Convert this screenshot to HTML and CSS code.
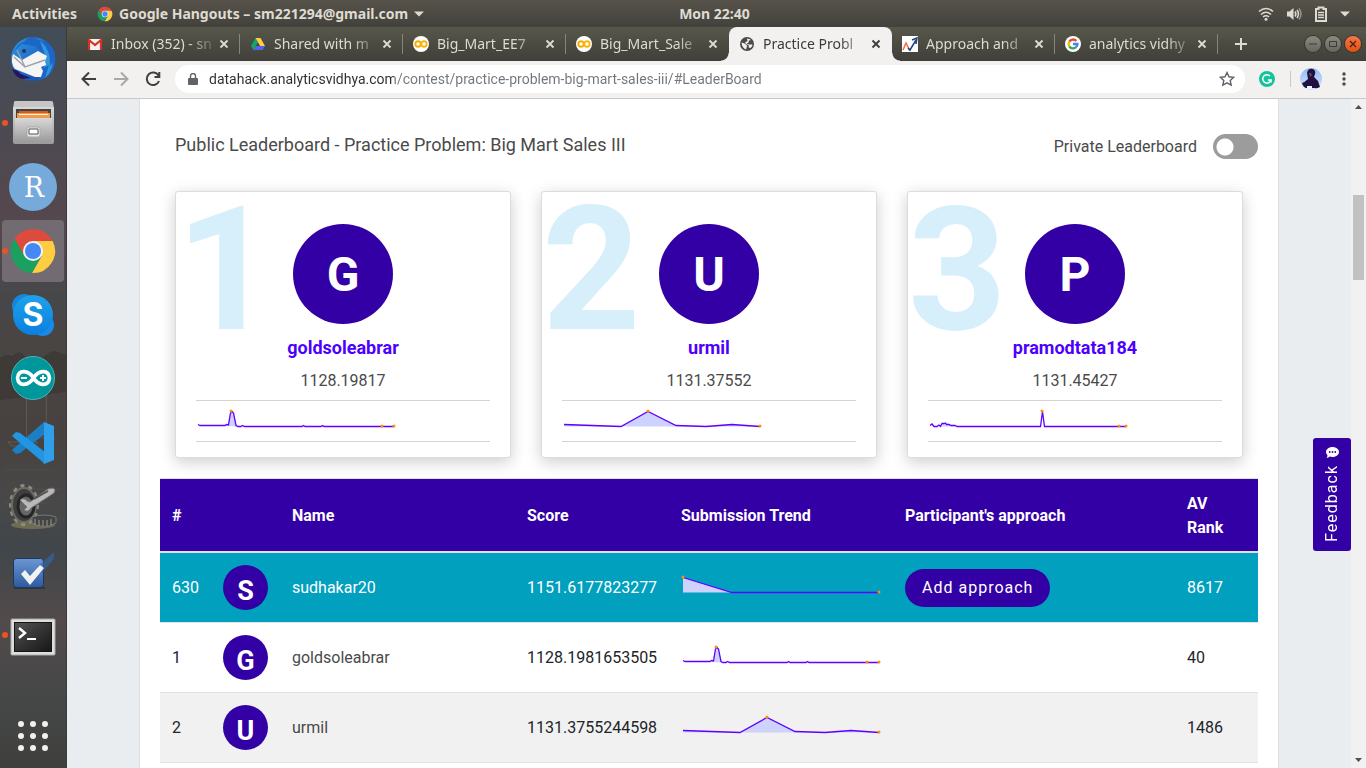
FILE: index.html
```html
<!DOCTYPE html>
<html lang="en">
<head>
<meta charset="utf-8">
<meta name="viewport" content="width=device-width, initial-scale=1">
<title>Practice Problem: Big Mart Sales III</title>
<link rel="stylesheet" href="styles.css">
</head>
<body>
<svg class="defs" aria-hidden="true">
  <defs>
    <linearGradient id="sky" x1="0" y1="0" x2="0" y2="1"><stop offset="0" stop-color="#1fa2ea"/><stop offset="1" stop-color="#0a7fe0"/></linearGradient>
    <linearGradient id="bird" x1="0" y1="0" x2="1" y2="1"><stop offset="0" stop-color="#2f9be6"/><stop offset=".6" stop-color="#1e62c4"/><stop offset="1" stop-color="#1a4399"/></linearGradient>
    <linearGradient id="metal" x1="0" y1="0" x2="0" y2="1"><stop offset="0" stop-color="#d8d8d8"/><stop offset="1" stop-color="#9b9b9b"/></linearGradient>
    <linearGradient id="screen" x1="0" y1="0" x2="1" y2="1"><stop offset="0" stop-color="#555"/><stop offset=".5" stop-color="#333"/><stop offset="1" stop-color="#171717"/></linearGradient>
    <linearGradient id="tick" x1="0" y1="0" x2="0" y2="1"><stop offset="0" stop-color="#6b97d3"/><stop offset="1" stop-color="#2c5a9e"/></linearGradient>
    <linearGradient id="photo" x1="0" y1="0" x2="0" y2="1"><stop offset="0" stop-color="#8fbcf4"/><stop offset="1" stop-color="#d5e6fb"/></linearGradient>
  </defs>
  <symbol id="chrome" viewBox="0 0 48 48">
    <path fill="#dd4b3e" d="M5.500 12A22 22 0 0 1 43.600 14H24L15.300 29Z"/>
    <path fill="#ffcd42" d="M43.600 14A22 22 0 0 1 22.900 46L32.700 29L24 14Z"/>
    <path fill="#1aa15f" d="M22.900 46A22 22 0 0 1 5.500 12L15.300 29H32.700Z"/>
    <circle cx="24" cy="24" r="10" fill="#f3f3f3"/><circle cx="24" cy="24" r="8" fill="#4587f3"/>
  </symbol>
  <symbol id="close" viewBox="0 0 10 10"><path d="M1.500 1.500l7 7m0-7l-7 7" fill="none" stroke="currentColor" stroke-width="1.800"/></symbol>
  <symbol id="colab" viewBox="0 0 16 16"><circle cx="8" cy="8" r="8" fill="#fff"/><circle cx="5" cy="8" r="2.700" fill="none" stroke="#f9ab00" stroke-width="1.900"/><circle cx="11" cy="8" r="2.700" fill="none" stroke="#fbb60f" stroke-width="1.900"/></symbol>
  <symbol id="trend-me" viewBox="0 0 200 20"><path class="area" d="M2 3.500L51 18.500H2Z"/><path class="line" d="M2 3.500L51 18.500H198"/><circle class="dot" cx="2" cy="3" r="1.500"/><circle class="dot" cx="198" cy="18" r="1.500"/></symbol>
  <symbol id="trend-g" viewBox="0 0 200 20"><path class="area" d="M31 18L35 4.500H37L41 18.500Z"/><path class="line" d="M2 16.500L4 17.500H29L30.500 16.500L32.500 17L34.500 5L36 3.500L37.500 5L40 17.500L42 18.500H45L46.500 17.500L48.500 18.500H106L107.500 17.500L109 18.500H125L126.500 17.500L128 18.500H198"/><circle class="dot" cx="35" cy="3" r="1.500"/><circle class="dot" cx="186" cy="18" r="1.500"/><circle class="dot" cx="198" cy="18" r="1.500"/></symbol>
  <symbol id="trend-u" viewBox="0 0 200 20"><path class="area" d="M2 16.500L59 18.500L86 3.500L114 18L144 18.500L170 16.500L198 18.500H2Z"/><path class="line" d="M2 16.500L59 18.500L86 3.500L114 17.500L144 18.500L170 16.500L198 18.500"/><circle class="dot" cx="86" cy="3" r="1.500"/><circle class="dot" cx="198" cy="18" r="1.500"/></symbol>
  <symbol id="trend-p" viewBox="0 0 200 20"><path class="area" d="M12 18.500L14 16L18 15L23 17L28 18.500Z"/><path class="line" d="M2 17.500L4 16L6 18.500H9L11 17L12.500 18.500L14 15.500H16L17.500 15L18.500 16.500H21L23 17.500H27L29 18.500H112.500L114.500 3.500L116.500 18.500H198"/><circle class="dot" cx="114" cy="3" r="1.500"/><circle class="dot" cx="191" cy="18" r="1.500"/><circle class="dot" cx="198" cy="18" r="1.500"/></symbol>
</svg>

<header class="topbar">
  <div class="topbar-left">
    <button class="bar-button">Activities</button>
    <button class="bar-button app-menu"><svg width="16" height="16"><use href="#chrome"/></svg><span>Google Hangouts – sm221294@gmail.com</span><svg width="10" height="6" viewBox="0 0 10 6"><path d="M0 .5h10L5 5.500z" fill="currentColor"/></svg></button>
  </div>
  <button class="clock">Mon 22:40</button>
  <div class="topbar-right">
    <svg width="16" height="16" viewBox="0 0 16 16" fill="none" stroke="#dfdbd2" stroke-width="1.600"><path d="M1 5.500Q8-.5 15 5.500M3 8.500Q8 4 13 8.500M5 11Q8 8.500 11 11"/><circle cx="8" cy="13.300" r="1.500" fill="#dfdbd2" stroke="none"/></svg>
    <svg width="16" height="16" viewBox="0 0 16 16" fill="none" stroke="#dfdbd2" stroke-width="1.500"><path d="M1 5.500h2.500L7.500 2v12L3.500 10.500H1z" fill="#dfdbd2" stroke="none"/><path d="M9 5.500q1.800 2.500 0 5M11 4q3 4 0 8"/><path d="M13 2.500q4 5.500 0 11" opacity=".5"/></svg>
    <svg width="14" height="16" viewBox="0 0 14 16" fill="none" stroke="#dfdbd2"><path d="M2 3h2.500V1.500h5V3H12v12H2z" stroke-width="2"/><path d="M4 6.500h6M4 9h6M4 11.500h6" stroke-width="1.500"/></svg>
    <svg width="10" height="6" viewBox="0 0 10 6"><path d="M0 .5h10L5 5.500z" fill="#dfdbd2"/></svg>
  </div>
</header>

<div class="desktop">
  <nav class="dock" aria-label="Applications">
    <svg class="wallpaper" viewBox="0 0 67 741" preserveAspectRatio="none" aria-hidden="true">
      <path d="M0 331q6-5 13-2q6-8 14 2q12 2 20-3q7-6 12-3l8 3v37l-67 8z" fill="#332f2c" opacity=".5"/>
      <path d="M27 345v69M47 350v60M8 415h30l-3 4H12zM42 411h14" fill="none" stroke="#8e8983" opacity=".35"/>
      <path d="M4 443h50M12 462h50M3 476h45M15 492h50" stroke="#777" opacity=".15"/>
    </svg>
    <button class="dock-item" aria-label="Thunderbird"><svg viewBox="0 0 48 48"><circle cx="24" cy="24" r="22" fill="url(#bird)"/><path d="M5 16Q10 8 16 6q4-5 9-4q5 1 3 3q14 0 18 14q2 12-5 20q-4 5-12 6l5-8-3-7 5-3-1-8-9-8-13-2z" fill="#1c66c8"/><path d="M31 6q11 8 10 25l3-4q-1 10-8 16l4-13-5 3 1-13z" fill="#38a7e2" opacity=".75"/><path d="M4 19l9 6 16-9 9 5-2 5 1 4-5 2 2 4-2 6-6 0-20-8Q1 28 4 19z" fill="#f5f5f6"/><path d="M8 15l8 17 20-7M5 22l11 10" fill="none" stroke="#9da1a8" stroke-width="1.400"/><path d="M3 34q6 1 9 5l10 4-9 1Q6 42 3 34z" fill="#25165f"/><circle cx="15" cy="16" r="2" fill="#27365c"/></svg></button>
    <button class="dock-item running" aria-label="Files"><svg viewBox="0 0 48 48"><path d="M5 3q0-1 2-1h35q2 0 2 1l1 7H4z" fill="#c6c6c6"/><path d="M4 8h41v35q0 2-2 2H6q-2 0-2-2z" fill="url(#metal)"/><path d="M7 10h35v10H7z" fill="#444"/><path d="M10 12h29v7H10z" fill="#cf5b25"/><path d="M8 14h33v5H8z" fill="#f19b4a"/><path d="M10 15h29v1H10z" fill="#fff5de"/><path d="M6 19h37v24H6z" fill="url(#metal)"/><rect x="18" y="28" width="13" height="10" rx="2" fill="#e8e8e8" stroke="#aaa"/><path d="M20 30h9v5h-9z" fill="#fff" stroke="#555"/></svg></button>
    <button class="dock-item" aria-label="RStudio"><svg viewBox="0 0 48 48"><circle cx="24" cy="24" r="24" fill="#75aadb"/><text x="25" y="34" class="logo-r">R</text></svg></button>
    <button class="dock-item running active" aria-label="Google Chrome"><svg viewBox="0 0 48 48"><use href="#chrome"/></svg></button>
    <button class="dock-item" aria-label="Skype"><svg viewBox="0 0 48 48"><circle cx="15" cy="15" r="12" fill="#1686d9"/><circle cx="34" cy="34" r="11" fill="#1b8ae6"/><circle cx="24" cy="24" r="20" fill="url(#sky)"/><text x="24" y="35" class="logo-s">S</text></svg></button>
    <button class="dock-item" aria-label="Arduino"><svg viewBox="0 0 48 48"><circle cx="24" cy="23" r="21.500" fill="#00979c" stroke="#4db4b6"/><path d="M24.500 23c-5-8-15-9-16 0c1 9 11 8 16 0c5-8 15-9 16 0c-1 9-11 8-16 0z" fill="none" stroke="#fff" stroke-width="3.600"/><path d="M12 23h6M31 23h6M34 20v6" stroke="#fff" stroke-width="2"/></svg></button>
    <button class="dock-item" aria-label="Visual Studio Code"><svg viewBox="0 0 48 48"><path d="M35 3L3 31l4 4 4-1L36 15z" fill="#1c7fc5"/><path d="M3 17l4-4 4 1 25 19v12z" fill="#2196e3"/><path d="M35 3l10 4v34l-10 4q-1-1 0-2V4q-1-1 0-1z" fill="#2f9fea"/></svg></button>
    <button class="dock-item" aria-label="System tools"><svg viewBox="0 0 48 48"><ellipse cx="24" cy="42" rx="22" ry="4" fill="#8a875b" opacity=".6"/><ellipse cx="15" cy="22" rx="13" ry="19" fill="none" stroke="#8c8d76" stroke-width="4" stroke-dasharray="4 4"/><ellipse cx="15" cy="22" rx="12" ry="17" fill="#3e3e3e" stroke="#6a6a6a" stroke-width="2"/><ellipse cx="17" cy="23" rx="8" ry="11" fill="#666" stroke="#252525" stroke-width="3"/><path d="M11 17q4-3 7 1l3 1 18-13q6-2 7 1q0 3-4 5L22 25q-3 5-7 2l3-3-3-3z" fill="#b9b9b9" stroke="#777"/><path d="M25 16l14-8" stroke="#555" stroke-width="2"/><path d="M23 34q12-4 24 0v6q-12 7-24 0z" fill="#444" stroke="#777"/><path d="M26 36v6m4-5v6m4-6v6m4-6v6m4-7v6" stroke="#999"/></svg></button>
    <button class="dock-item" aria-label="Tasks"><svg viewBox="0 0 48 48"><path d="M5 40h31v2H5z" fill="#222" opacity=".5"/><rect x="4.500" y="11.500" width="30" height="29" rx="3" fill="url(#tick)" stroke="#1b3865"/><path d="M28 20L45 5v7L33 26z" fill="#3268ae" opacity=".6"/><path d="M12 27l4-4 5 6 10-11 4 3-14 17z" fill="#f1f2f4"/></svg></button>
    <button class="dock-item running" aria-label="Terminal"><svg viewBox="0 0 48 48"><rect x="2" y="8" width="44" height="36" rx="1" fill="#dedede" stroke="#aaa"/><rect x="5.500" y="11.500" width="37" height="29" fill="url(#screen)" stroke="#151515"/><path d="M10 17l6 5-6 5" fill="none" stroke="#fff" stroke-width="2.400"/><path d="M18 28h9" stroke="#fff" stroke-width="2"/></svg></button>
    <button class="dock-item apps" aria-label="Show applications"><svg viewBox="0 0 48 48" fill="#f2f1ef"><circle cx="12" cy="12" r="3"/><circle cx="24" cy="12" r="3"/><circle cx="36" cy="12" r="3"/><circle cx="12" cy="24" r="3"/><circle cx="24" cy="24" r="3"/><circle cx="36" cy="24" r="3"/><circle cx="12" cy="36" r="3"/><circle cx="24" cy="36" r="3"/><circle cx="36" cy="36" r="3"/></svg></button>
  </nav>

  <div class="browser">
    <div class="tabs">
      <div class="tab"><svg class="favicon" viewBox="0 0 16 16"><path d="M1 3h14v11H1z" fill="#f2f2f2"/><path d="M2 14V4l6 5 6-5v10" fill="none" stroke="#d93025" stroke-width="2.200"/></svg><a class="tab-title" href="#">Inbox (352) - sn</a><button class="tab-close" aria-label="Close"><svg><use href="#close"/></svg></button></div>
      <div class="tab"><svg class="favicon" viewBox="0 0 16 16"><path d="M5.500 2L1 10l2.300 4L8 6z" fill="#11a861"/><path d="M5.500 2h5L15 10h-4.800z" fill="#ffcf48"/><path d="M5.500 10H15l-2.400 4H3.300z" fill="#4f66e8"/></svg><a class="tab-title" href="#">Shared with m</a><button class="tab-close" aria-label="Close"><svg><use href="#close"/></svg></button></div>
      <div class="tab"><svg class="favicon"><use href="#colab"/></svg><a class="tab-title" href="#">Big_Mart_EE7</a><button class="tab-close" aria-label="Close"><svg><use href="#close"/></svg></button></div>
      <div class="tab"><svg class="favicon"><use href="#colab"/></svg><a class="tab-title" href="#">Big_Mart_Sale</a><button class="tab-close" aria-label="Close"><svg><use href="#close"/></svg></button></div>
      <div class="tab current"><svg class="favicon" viewBox="0 0 16 16"><circle cx="8" cy="8" r="7" fill="#4a4a4a"/><path d="M2.500 6.500Q6 7 8 9.500Q8 11 7 13.500Q3 12 2.500 6.500zM8 2.500q2.500 0 4 1.500l-2 .5-.5 2-2 1.500 3 .5 3 0q0 2-2 3.500l-2-.5 .5-2L7 8 6 6.500 8.500 5z" fill="#f2f1f0"/></svg><a class="tab-title" href="#">Practice Probl</a><button class="tab-close" aria-label="Close"><svg><use href="#close"/></svg></button></div>
      <div class="tab"><svg class="favicon" viewBox="0 0 16 16"><path d="M0 0h16v16H0z" fill="#fff"/><path d="M1 14L4 7l4 8" fill="none" stroke="#ee6b45" stroke-width="1.500"/><path d="M6 12l2 2 6-10M10 4l5-2-1 6" fill="none" stroke="#1d4380" stroke-width="1.500"/></svg><a class="tab-title" href="#">Approach and</a><button class="tab-close" aria-label="Close"><svg><use href="#close"/></svg></button></div>
      <div class="tab"><svg class="favicon" viewBox="0 0 16 16"><circle cx="8" cy="8" r="8" fill="#fff"/><g fill="none" stroke-width="2.400"><path d="M4.300 5.700A4.400 4.400 0 0 1 11.300 5" stroke="#ea4335"/><path d="M4.300 10.300a4.400 4.400 0 0 1 0-4.600" stroke="#fbbc05"/><path d="M11 11.200a4.400 4.400 0 0 1-6.700-.9" stroke="#34a853"/><path d="M8 8h4.400a4.400 4.400 0 0 1-1.400 3.200" stroke="#4285f4"/></g></svg><a class="tab-title" href="#">analytics vidhy</a><button class="tab-close" aria-label="Close"><svg><use href="#close"/></svg></button></div>
      <button class="new-tab" aria-label="New tab"><svg width="12" height="12" viewBox="0 0 12 12"><path d="M6 0v12M0 6h12" stroke="currentColor" stroke-width="2"/></svg></button>
      <div class="window-buttons">
        <button aria-label="Minimize"><svg viewBox="0 0 16 16"><path d="M4 8h8" stroke="#3c3b37"/></svg></button>
        <button aria-label="Maximize"><svg viewBox="0 0 16 16"><path d="M4.500 5.500h7v5h-7z" fill="none" stroke="#3c3b37"/></svg></button>
        <button class="quit" aria-label="Close window"><svg viewBox="0 0 16 16"><path d="M5 5l6 6m0-6l-6 6" stroke="#46210f" stroke-width="1.300"/></svg></button>
      </div>
    </div>

    <div class="toolbar">
      <button class="tool" aria-label="Back"><svg viewBox="0 0 16 16"><path d="M15 8H2M8 1.500L1.500 8 8 14.500" /></svg></button>
      <button class="tool" aria-label="Forward" disabled><svg viewBox="0 0 16 16"><path d="M1 8h13M8 1.500L14.500 8 8 14.500"/></svg></button>
      <button class="tool" aria-label="Reload"><svg viewBox="0 0 16 16"><path d="M13.500 4.500A6.300 6.300 0 1 0 14 10M14.300 1v5H9.500" /></svg></button>
      <form class="omnibox">
        <svg width="10" height="12" viewBox="0 0 10 12"><path d="M1 5h8q1 0 1 1v5q0 1-1 1H1q-1 0-1-1V6q0-1 1-1z" fill="#5f6368"/><path d="M2.500 5V3a2.500 2.500 0 0 1 5 0v2" fill="none" stroke="#5f6368" stroke-width="1.400"/></svg>
        <input type="text" aria-label="Address" value="datahack.analyticsvidhya.com/contest/practice-problem-big-mart-sales-iii/#LeaderBoard">
        <button type="button" aria-label="Bookmark"><svg width="16" height="16" viewBox="0 0 16 16"><path d="M8 1.500l2 4.300 4.700.5-3.500 3.200 1 4.700L8 11.800l-4.200 2.400 1-4.700L1.300 6.300 6 5.800z" fill="none" stroke="#5f6368" stroke-width="1.400"/></svg></button>
      </form>
      <button class="extension" aria-label="Grammarly"><svg width="16" height="16" viewBox="0 0 16 16"><circle cx="8" cy="8" r="8" fill="#15c39a"/><path d="M11 5A4.200 4.200 0 1 0 12 9H9m3 0v2.500" fill="none" stroke="#fff" stroke-width="1.500"/></svg></button>
      <button class="profile" aria-label="Profile"><svg width="22" height="22" viewBox="0 0 22 22"><circle cx="11" cy="11" r="11" fill="url(#photo)"/><path d="M7 5q1-5 6-4q4 2 1 8l4 4 2 6q-4 2-5 1H6Q3 19 2 15q3-1 6-4z" fill="#22103f"/><path d="M9 5q2-1 3 2l-2 2z" fill="#6a4660"/><path d="M7 18h5v3H7z" fill="#e8f2ff"/></svg></button>
      <button class="extension" aria-label="Menu"><svg width="4" height="16" viewBox="0 0 4 16" fill="#4a4a4a"><circle cx="2" cy="3" r="1.700"/><circle cx="2" cy="8" r="1.700"/><circle cx="2" cy="13" r="1.700"/></svg></button>
    </div>

    <div class="viewport">
      <div class="page">
        <main class="container">
          <div class="board-head">
            <h1>Public Leaderboard - Practice Problem: Big Mart Sales III</h1>
            <label class="switch-label" for="private">Private Leaderboard <input type="checkbox" class="switch" id="private"></label>
          </div>

          <section class="podium">
            <article class="card"><span class="place">1</span><div class="avatar">G</div><a class="card-name" href="#">goldsoleabrar</a><p class="card-score">1128.19817</p><div class="card-trend"><svg class="trend"><use href="#trend-g"/></svg></div></article>
            <article class="card"><span class="place">2</span><div class="avatar">U</div><a class="card-name" href="#">urmil</a><p class="card-score">1131.37552</p><div class="card-trend"><svg class="trend"><use href="#trend-u"/></svg></div></article>
            <article class="card"><span class="place">3</span><div class="avatar">P</div><a class="card-name" href="#">pramodtata184</a><p class="card-score">1131.45427</p><div class="card-trend"><svg class="trend"><use href="#trend-p"/></svg></div></article>
          </section>

          <table class="board">
            <colgroup><col class="col-rank"><col class="col-avatar"><col class="col-name"><col class="col-score"><col class="col-trend"><col><col class="col-av"></colgroup>
            <thead><tr><th>#</th><th></th><th>Name</th><th>Score</th><th>Submission Trend</th><th>Participant's approach</th><th>AV Rank</th></tr></thead>
            <tbody>
              <tr class="me"><td>630</td><td><span class="avatar small">S</span></td><td><a href="#">sudhakar20</a></td><td>1151.6177823277</td><td><svg class="trend"><use href="#trend-me"/></svg></td><td><button class="approach">Add approach</button></td><td>8617</td></tr>
              <tr><td>1</td><td><span class="avatar small">G</span></td><td><a href="#">goldsoleabrar</a></td><td>1128.1981653505</td><td><svg class="trend"><use href="#trend-g"/></svg></td><td></td><td>40</td></tr>
              <tr><td>2</td><td><span class="avatar small">U</span></td><td><a href="#">urmil</a></td><td>1131.3755244598</td><td><svg class="trend"><use href="#trend-u"/></svg></td><td></td><td>1486</td></tr>
            </tbody>
          </table>
        </main>
        <button class="feedback"><span>Feedback</span><svg width="13" height="12" viewBox="0 0 13 12"><path d="M6.500 0C10 0 13 2.200 13 5s-3 5-6.500 5q-1.500 0-2.700-.4Q2.500 11 .5 11q1-1.200 1-2.700Q0 7 0 5C0 2.200 3 0 6.500 0z" fill="#fff"/><circle cx="3.700" cy="5" r=".9" fill="#3300a5"/><circle cx="6.500" cy="5" r=".9" fill="#3300a5"/><circle cx="9.300" cy="5" r=".9" fill="#3300a5"/></svg></button>
      </div>
      <div class="scrollbar" aria-hidden="true">
        <svg width="7" height="4" viewBox="0 0 7 4"><path d="M0 4h7L3.500 0z" fill="#505050"/></svg>
        <div class="track"><div class="thumb"></div></div>
        <svg width="7" height="4" viewBox="0 0 7 4"><path d="M0 0h7L3.500 4z" fill="#505050"/></svg>
      </div>
    </div>
  </div>
</div>
</body>
</html>
```
FILE: styles.css
```css
* { box-sizing: border-box; }

body {
  margin: 0;
  height: 100vh;
  overflow: hidden;
  display: flex;
  flex-direction: column;
  font: 16px/24px Roboto, sans-serif;
  color: #212529;
}

button { font: inherit; color: inherit; border: 0; padding: 0; background: none; }
a { color: inherit; text-decoration: none; }
h1, p { margin: 0; }
.defs { position: absolute; width: 0; height: 0; }

/* System bar */
.topbar {
  flex: none;
  height: 27px;
  display: grid;
  grid-template-columns: 1fr auto 1fr;
  align-items: center;
  padding: 0 16px 0 12px;
  background: linear-gradient(#57534b, #42413b);
  color: #dfdbd2;
  font: bold 14px/20px "Noto Sans", sans-serif;
}
.topbar-left, .topbar-right, .app-menu { display: flex; align-items: center; }
.topbar-left { gap: 20px; }
.app-menu { gap: 6px; }
.clock { margin-left: 67px; }
.topbar-right { justify-content: flex-end; gap: 12px; }

.desktop { flex: 1; min-height: 0; display: flex; }

/* Dock */
.dock {
  position: relative;
  flex: none;
  width: 67px;
  display: flex;
  flex-direction: column;
  background: linear-gradient(#414d58, #4e4951 16%, #56474d 28%, #47474a 36%, #494542 43%, #47423f 55%, #494849 64%, #40464a 70%, #524a4b 80%, #464847 90%, #3f403e);
  border-right: 1px solid #3b3b3a;
}
.wallpaper { position: absolute; inset: 0; width: 100%; height: 100%; }
.dock-item {
  position: relative;
  height: 64px;
  flex: none;
  display: grid;
  place-items: center;
}
.dock-item svg { position: relative; width: 48px; height: 48px; }
.dock-item.apps { margin-top: auto; }
.dock-item.active::before {
  content: "";
  position: absolute;
  inset: 1px 2px;
  border-radius: 4px;
  background: #726c72;
}
.dock-item.running::after {
  content: "";
  position: absolute;
  left: 2px;
  top: 29px;
  width: 6px;
  height: 6px;
  border-radius: 50%;
  background: #e95420;
}
.logo-r { font: 27px "DejaVu Serif", serif; fill: #fff; text-anchor: middle; }
.logo-s { font: bold 32px Inter, sans-serif; fill: #fff; text-anchor: middle; }

/* Browser chrome */
.browser { flex: 1; min-width: 0; display: flex; flex-direction: column; }
.tabs {
  flex: none;
  height: 34px;
  display: flex;
  align-items: center;
  padding: 0 5px 0 10px;
  background: linear-gradient(#57574a, #403f3a);
  color: #dfdbd2;
  font: 14px/20px "Noto Sans", sans-serif;
}
.tab {
  position: relative;
  flex: 0 1 163px;
  min-width: 0;
  height: 34px;
  display: flex;
  align-items: center;
  padding: 0 7px 0 10px;
}
.tab::after {
  content: "";
  position: absolute;
  right: 0;
  top: 7px;
  height: 20px;
  border-right: 1px solid #86867b;
}
.tab:has(+ .current)::after { display: none; }
.tab.current { background: #f2f1f0; color: #3c3b37; border-radius: 8px 8px 0 0; }
.tab.current::before, .tab.current::after {
  content: "";
  position: absolute;
  top: auto;
  bottom: 0;
  width: 8px;
  height: 8px;
  border: 0;
}
.tab.current::before { left: -8px; background: radial-gradient(circle at 0 0, transparent 7px, #f2f1f0 8px); }
.tab.current::after { right: -8px; background: radial-gradient(circle at 100% 0, transparent 7px, #f2f1f0 8px); }
.favicon { flex: none; width: 16px; height: 16px; margin-right: 8px; }
.tab-title {
  flex: 1;
  white-space: nowrap;
  mask-image: linear-gradient(to right, #000 75%, transparent 105%);
}
.tab-close { flex: none; width: 18px; height: 18px; margin-left: 2px; display: grid; place-items: center; }
.tab-close svg { width: 10px; height: 10px; }
.new-tab { flex: none; width: 46px; height: 34px; display: grid; place-items: center; }
.window-buttons { margin-left: auto; display: flex; gap: 4px; }
.window-buttons button {
  width: 16px;
  height: 16px;
  border-radius: 50%;
  background: linear-gradient(#8b897f, #68675f);
  box-shadow: 0 0 0 1px #35342f;
}
.window-buttons svg { display: block; }
.window-buttons .quit { background: linear-gradient(#f5784a, #e2500f); }

.toolbar {
  flex: none;
  height: 38px;
  display: flex;
  align-items: center;
  padding: 0 20px 2px 14px;
  background: #f2f1f0;
  border-bottom: 1px solid #c8c8c8;
}
.tool { width: 16px; height: 16px; margin-right: 16px; color: #3f3f3f; }
.tool svg { display: block; fill: none; stroke: currentColor; stroke-width: 2; }
.tool:disabled { color: #a8a8a8; }
.tool:nth-of-type(3) { margin-right: 14px; }
.omnibox {
  flex: 1;
  height: 28px;
  display: flex;
  align-items: center;
  gap: 11px;
  padding: 0 10px 0 13px;
  border-radius: 14px;
  background: #fff;
}
.omnibox input {
  flex: 1;
  min-width: 0;
  padding: 0;
  border: 0;
  outline: 0;
  font: 14px/20px Roboto, sans-serif;
  color: transparent;
  background: linear-gradient(to right, #2e2e2e 185px, #70757a 185px);
  background-clip: text;
}
.omnibox button { height: 16px; }
.omnibox button svg, .extension svg, .profile svg { display: block; }
.extension { margin-left: 14px; }
.profile { margin: 0 6px 0 15px; padding-left: 10px; background: linear-gradient(#c8c8c8, #c8c8c8) left center / 1px 16px no-repeat; }

/* Page */
.viewport { flex: 1; min-height: 0; display: flex; }
.page { position: relative; flex: 1; min-width: 0; overflow: hidden; background: #e9edf0; }
.container {
  max-width: 1140px;
  min-height: 100%;
  margin: 0 auto;
  padding: 35px 20px 0;
  background: #fff;
  border: solid #dcdfe1;
  border-width: 0 1px;
}
.board-head {
  display: flex;
  justify-content: space-between;
  align-items: center;
  padding-left: 15px;
  color: #4a4a4a;
}
h1 { font-size: 18px; font-weight: 400; line-height: 22px; padding-bottom: 3px; }
.switch-label { display: flex; align-items: center; gap: 16px; }
.switch {
  appearance: none;
  width: 45px;
  height: 25px;
  margin: 0;
  border-radius: 13px;
  background: radial-gradient(circle at 12px 13px, #fff 8px, #9c9c9c 9px);
}

.podium {
  display: grid;
  grid-template-columns: repeat(3, 1fr);
  gap: 30px;
  margin: 32px 0 20px;
  padding: 0 15px;
}
.card {
  position: relative;
  display: flex;
  flex-direction: column;
  align-items: center;
  padding: 32px 20px 15px;
  border: 1px solid #dcdcdc;
  border-radius: 3px;
  background: #fff;
  box-shadow: 0 4px 16px rgba(0, 0, 0, .2);
}
.place {
  position: absolute;
  left: 0;
  top: -8px;
  font-size: 172px;
  font-weight: 700;
  line-height: 172px;
  color: #d7effb;
}
.avatar {
  position: relative;
  width: 100px;
  height: 100px;
  border-radius: 50%;
  background: #3300a5;
  color: #fff;
  font-size: 48px;
  font-weight: 700;
  line-height: 102px;
  text-align: center;
}
.card-name { margin-top: 12px; font-size: 18px; font-weight: 700; color: #4d00ff; }
.card-score { margin: 9px 0 7px; color: #4a4a4a; }
.card-trend {
  align-self: stretch;
  padding: 7px 0 13px;
  border: solid #d4d4d4;
  border-width: 1px 0;
}
.trend { width: 200px; height: 20px; }
.card-trend .trend { display: block; }
.area { fill: #cdd2ff; }
.line { fill: none; stroke: #6000ff; stroke-width: 1.3px; }
.dot { fill: #ff9100; }

.board { width: 100%; table-layout: fixed; border-collapse: collapse; }
.col-rank { width: 51px; }
.col-avatar { width: 69px; }
.col-name { width: 235px; }
.col-score { width: 154px; }
.col-trend { width: 224px; }
.col-av { width: 83px; }
.board th, .board td { padding: 12px; border-top: 1px solid #dee2e6; text-align: left; vertical-align: middle; }
.board th { padding: 13px 12px 11px; background: #3300a5; color: #fff; font-weight: 700; border-bottom: 2px solid #dee2e6; }
.board td a { color: #4a4a4a; }
.board tbody tr:nth-child(odd) { background: #f1f1f1; }
.board tbody tr.me { background: #00a0be; color: #fff; }
.board .me a { color: #fff; }
.board tbody tr:last-child { border-bottom: 1px solid #dee2e6; }
.avatar.small { display: block; width: 45px; height: 45px; font-size: 27px; line-height: 52px; }
.approach {
  display: block;
  padding: 7px 17px;
  border-radius: 19px;
  background: #3300a5;
  color: #fff;
  letter-spacing: 1px;
}

.feedback {
  position: absolute;
  right: 0;
  top: 339px;
  width: 38px;
  display: flex;
  flex-direction: column-reverse;
  align-items: center;
  gap: 6px;
  padding: 9px 0;
  border-radius: 3px;
  background: #3300a5;
  color: #fff;
  letter-spacing: 1px;
}
.feedback span { writing-mode: vertical-rl; rotate: 180deg; }

.scrollbar {
  flex: none;
  width: 15px;
  display: flex;
  flex-direction: column;
  align-items: center;
  padding: 6px 0;
  background: #f1f1f1;
}
.track { flex: 1; align-self: stretch; padding: 86px 0 0 2px; }
.thumb { width: 11px; height: 85px; background: #c1c1c1; }
```
